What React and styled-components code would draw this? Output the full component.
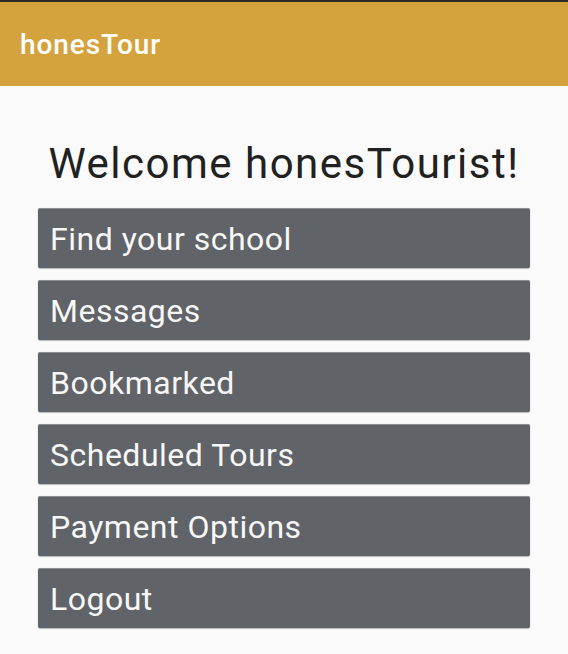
import React from "react";
import styled, { createGlobalStyle } from "styled-components";

const Global = createGlobalStyle`
  html, body { margin: 0; padding: 0; background: #fafafa; }
  body { font-family: Roboto, "Noto Sans", sans-serif; }
`;

const Page = styled.div`
  min-height: 654px;
  background: #fafafa;
  display: flex;
  flex-direction: column;
`;

const StatusEdge = styled.div`
  height: 2px;
  background: #2b2a22;
`;

const AppBar = styled.header`
  height: 84px;
  background: #d4a33e;
  display: flex;
  align-items: center;
  padding: 0 20px;
  box-sizing: border-box;
`;

const AppTitle = styled.h1`
  margin: 0;
  color: #ffffff;
  font-size: 28px;
  font-weight: 500;
  letter-spacing: 0.9px;
`;

const Content = styled.main`
  display: flex;
  flex-direction: column;
  align-items: center;
  padding: 50px 38px 0;
`;

const Welcome = styled.h2`
  margin: 0 0 16px;
  font-size: 42px;
  font-weight: 400;
  color: #212121;
  line-height: 56px;
  letter-spacing: 1.5px;
`;

const Menu = styled.nav`
  align-self: stretch;
  display: flex;
  flex-direction: column;
  gap: 12px;
`;

const MenuButton = styled.button`
  height: 60px;
  border: none;
  border-radius: 2px;
  background: #606367;
  color: #f7f7f7;
  font-family: Roboto, "Noto Sans", sans-serif;
  font-size: 32px;
  font-weight: 400;
  letter-spacing: 0.5px;
  text-align: left;
  padding: 0 12px;
  box-shadow: 0 1px 1px rgba(0,0,0,0.25), 0 0 1px rgba(0,0,0,0.2);
  border-top: 1px solid #8a8c8f;
  cursor: pointer;
`;

const items = [
  "Find your school",
  "Messages",
  "Bookmarked",
  "Scheduled Tours",
  "Payment Options",
  "Logout",
];

export default function App() {
  return (
    <Page>
      <Global />
      <StatusEdge />
      <AppBar>
        <AppTitle>honesTour</AppTitle>
      </AppBar>
      <Content>
        <Welcome>Welcome honesTourist!</Welcome>
        <Menu>
          {items.map((t) => (
            <MenuButton key={t}>{t}</MenuButton>
          ))}
        </Menu>
      </Content>
    </Page>
  );
}
